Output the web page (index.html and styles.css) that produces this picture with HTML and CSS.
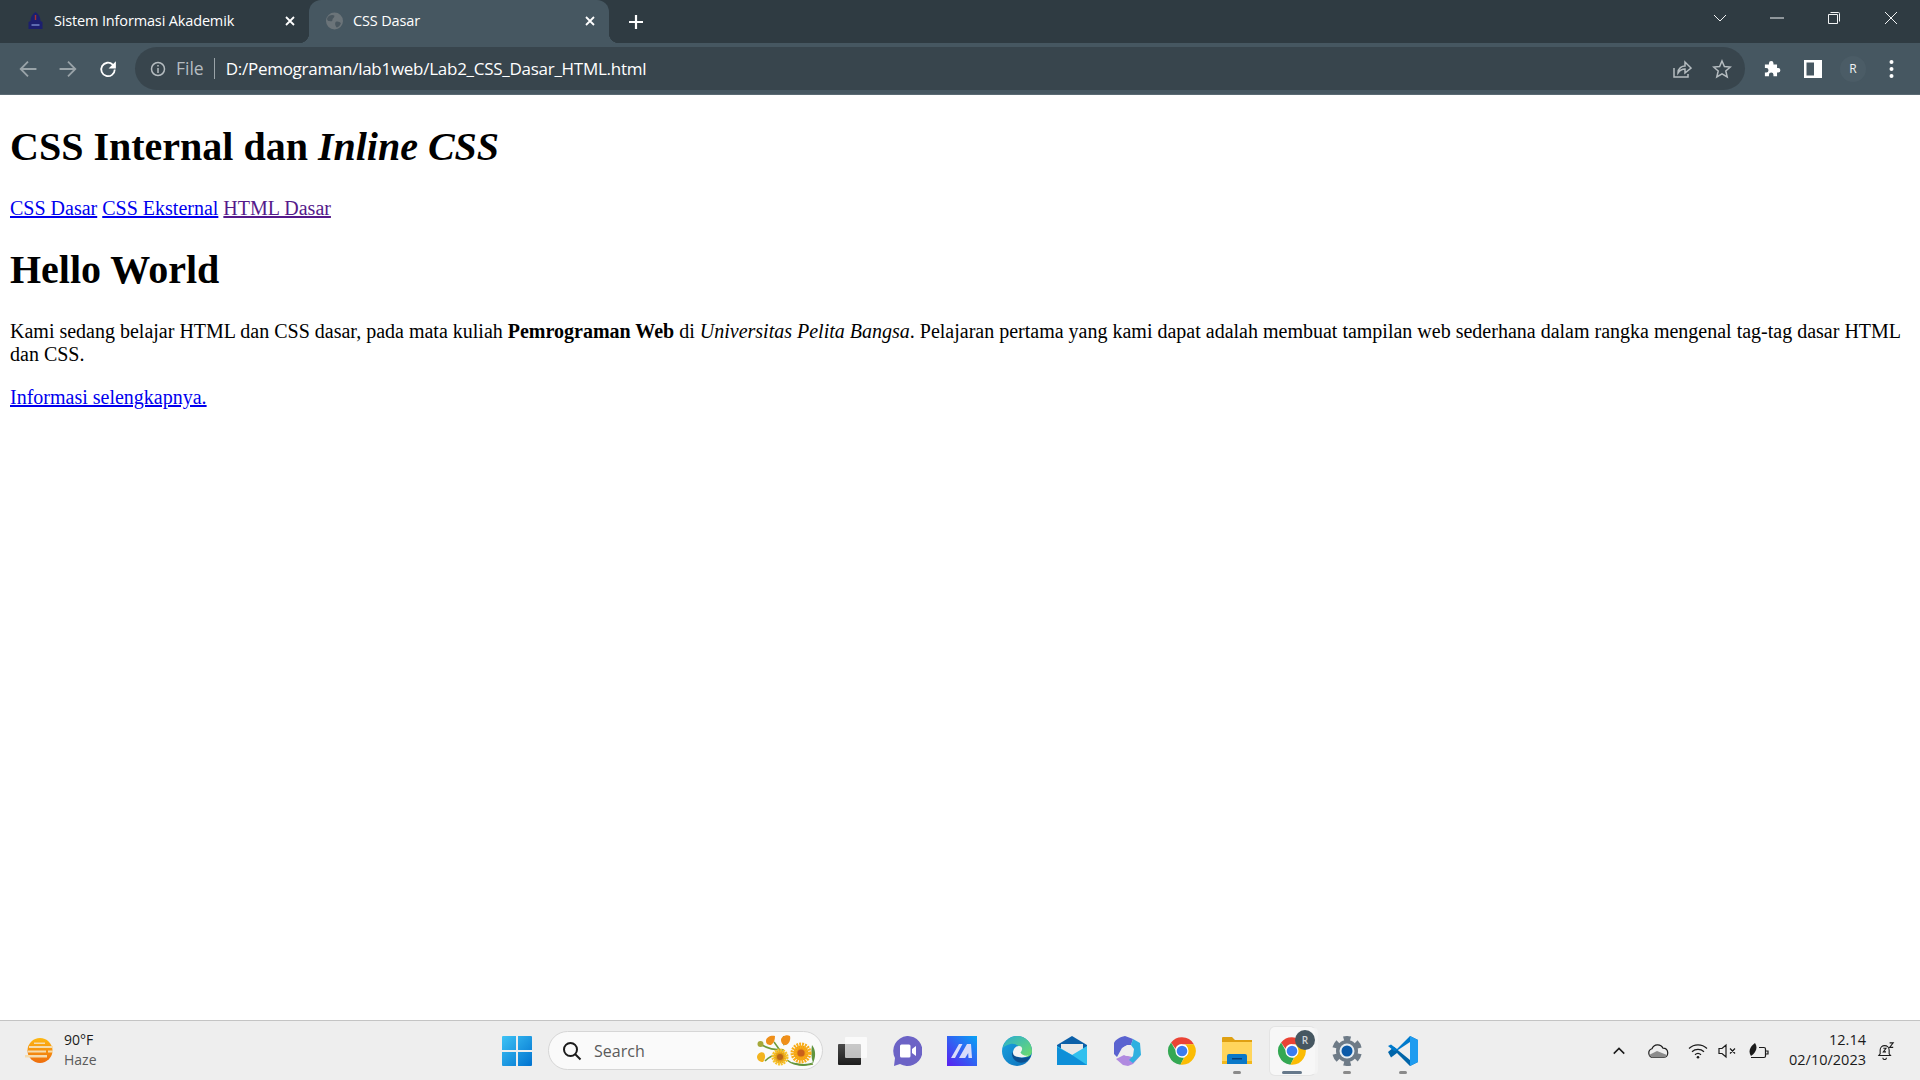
FILE: index.html
```html
<!DOCTYPE html>
<html lang="id">
<head>
  <meta charset="UTF-8" />
  <title>CSS Dasar</title>
  <link rel="stylesheet" href="styles.css">
</head>
<body>
  <svg class="defs" width="0" height="0">
    <symbol id="chrome" viewBox="0 0 48 48">
      <path fill="#ea4335" d="M24 2a22 22 0 0 1 19 11H24a11 11 0 0 0-10.400 7.400L6.500 10.300A22 22 0 0 1 24 2z"/>
      <path fill="#34a853" d="M6.500 10.300 15 25a11 11 0 0 0 12.400 9.500L21.500 45.900A22 22 0 0 1 6.500 10.300z"/>
      <path fill="#fbbc04" d="M43 13a22 22 0 0 1-21.500 32.900L30 30a11 11 0 0 0-1-17z"/>
      <circle cx="24" cy="24" r="10.500" fill="#fff"/>
      <circle cx="24" cy="24" r="8.500" fill="#3b7cf0"/>
    </symbol>
  </svg>

  <div class="window">
    <header class="tabstrip">
      <div class="tab">
        <svg class="favicon" viewBox="0 0 16 18">
          <path fill="#1c1f6e" d="M8 0c3 2 5 5 5 9l2 1v7H1v-7l2-1c0-4 2-7 5-9z"/>
          <path fill="#a8322d" d="M7.300 3h1.400v5H7.300z"/>
          <path fill="#5c6bb0" d="M4 12h8v2H4z"/>
        </svg>
        <span class="tab-title">Sistem Informasi Akademik</span>
        <svg class="tab-close" viewBox="0 0 10 10"><path d="M1 1l8 8M9 1l-8 8"/></svg>
      </div>
      <div class="tab tab-active">
        <svg class="favicon" viewBox="0 0 16 16">
          <circle cx="8" cy="8" r="8" fill="#6b7479"/>
          <path fill="#4a575f" d="M3 3c2-1 4-1 5 0 0 2-2 2-2 4s-2 1-3 1-2-1-2-2 1-2 2-3zM9 9c2-1 4 0 5 1-1 3-3 4-4 4-1-1-2-3-1-5z"/>
        </svg>
        <span class="tab-title">CSS Dasar</span>
        <svg class="tab-close" viewBox="0 0 10 10"><path d="M1 1l8 8M9 1l-8 8"/></svg>
      </div>
      <svg class="new-tab" viewBox="0 0 16 16"><path d="M8 1v14M1 8h14"/></svg>
      <div class="window-controls">
        <svg class="control" viewBox="0 0 14 14"><path d="M1 4l6 6 6-6"/></svg>
        <svg class="control" viewBox="0 0 14 14"><path d="M0 7h14"/></svg>
        <svg class="control" viewBox="0 0 14 14"><path d="M1.500 3.500h9v9h-9zM3.500 1.500h8a1 1 0 0 1 1 1v8"/></svg>
        <svg class="control" viewBox="0 0 14 14"><path d="M1 1l12 12M13 1L1 13"/></svg>
      </div>
    </header>

    <nav class="toolbar">
      <svg class="nav-icon nav-off" viewBox="0 0 16 16"><path d="M15.500 8H1.500M8 1.500L1.500 8 8 14.500"/></svg>
      <svg class="nav-icon nav-off" viewBox="0 0 16 16"><path d="M.5 8h14M8 1.500L14.500 8 8 14.500"/></svg>
      <svg class="nav-icon" viewBox="0 0 16 16"><path d="M14 8.500a6 6 0 1 1-1.800-4.400L14 6"/><path class="solid" d="M15 1v6.500H8.500z"/></svg>
      <div class="omnibox">
        <svg class="info" viewBox="0 0 16 16"><circle cx="8" cy="8" r="6.500"/><path d="M8 7v5M8 4v1.600"/></svg>
        <span class="scheme">File</span>
        <span class="url">D:/Pemograman/lab1web/Lab2_CSS_Dasar_HTML.html</span>
        <svg class="omni-icon share" viewBox="0 0 20 20"><path d="M2 9v9h14v-3M6 14c0-5 4-7 7-7V3l6 6-6 5v-4c-3 0-5 1-7 4z"/></svg>
        <svg class="omni-icon" viewBox="0 0 20 20"><path d="M10 2l2.400 5.500 6 .5-4.600 4 1.400 6L10 14.800 4.800 18l1.400-6-4.600-4 6-.5z"/></svg>
      </div>
      <svg class="tool-icon puzzle" viewBox="0 0 20 20"><path fill="#fff" d="M8 1a2.500 2.500 0 0 1 2.500 2.500V5h4v4h1.200a2.500 2.500 0 0 1 0 5h-1.200v4h-4v-1.500a2.500 2.500 0 0 0-5 0V18H1v-4h1.500a2.500 2.500 0 0 0 0-5H1V5h4.500V3.500A2.500 2.500 0 0 1 8 1z"/></svg>
      <svg class="tool-icon" viewBox="0 0 18 18"><path fill="#fff" fill-rule="evenodd" d="M0 0h18v18H0zM2.500 2.500v13H10v-13z"/></svg>
      <span class="avatar">R</span>
      <svg class="tool-icon menu" viewBox="0 0 4 18"><circle cx="2" cy="2" r="2" fill="#fff"/><circle cx="2" cy="9" r="2" fill="#fff"/><circle cx="2" cy="16" r="2" fill="#fff"/></svg>
    </nav>

    <main class="page">
      <h1>CSS Internal dan <i>Inline CSS</i></h1>
      <p>
        <a href="#a">CSS Dasar</a>
        <a href="#b">CSS Eksternal</a>
        <a class="visited" href="#c">HTML Dasar</a>
      </p>
      <h1 class="hello">Hello World</h1>
      <p>Kami sedang belajar HTML dan CSS dasar, pada mata kuliah <b>Pemrograman Web</b> di <i>Universitas Pelita Bangsa</i>. Pelajaran pertama yang kami dapat adalah membuat tampilan web sederhana dalam rangka mengenal tag-tag dasar HTML dan CSS.</p>
      <p><a href="#d">Informasi selengkapnya.</a></p>
    </main>

    <footer class="taskbar">
      <div class="weather">
        <svg class="weather-icon" viewBox="0 0 30 30">
          <defs>
            <linearGradient id="sun" x1="0" y1="0" x2="0" y2="1">
              <stop offset="0" stop-color="#fdb813"/>
              <stop offset="1" stop-color="#ee6c0c"/>
            </linearGradient>
          </defs>
          <circle cx="15" cy="14.500" r="12.500" fill="url(#sun)"/>
          <path fill="#f5dcae" d="M9 6.500h11v1.500H9zM4 10h24v2H4zM3 14.500h18v2H3zM23 14.500h5v2h-5zM0 19h22v2.500H0z"/>
        </svg>
        <div class="weather-text">
          <span>90°F</span>
          <span class="weather-sub">Haze</span>
        </div>
      </div>

      <div class="apps">
        <div class="app">
          <svg class="app-icon" viewBox="0 0 30 30">
            <defs>
              <linearGradient id="win" x1="0" y1="0" x2="1" y2="1">
                <stop offset="0" stop-color="#3ec3f5"/>
                <stop offset="1" stop-color="#0072cf"/>
              </linearGradient>
            </defs>
            <path fill="url(#win)" d="M0 1a1 1 0 0 1 1-1h13v14H0zM16 0h13a1 1 0 0 1 1 1v13H16zM0 16h14v14H1a1 1 0 0 1-1-1zM16 16h14v13a1 1 0 0 1-1 1H16z"/>
          </svg>
        </div>
        <div class="search">
          <svg class="search-icon" viewBox="0 0 20 20"><circle cx="8.500" cy="8.500" r="6.500"/><path d="M13 13l5.500 5.500"/></svg>
          <span class="search-text">Search</span>
          <svg class="flowers" viewBox="0 0 60 34">
            <path d="M5 11c6 4 14 5 22 5M17 8c3 4 5 7 7 10M8 27c4-4 8-6 12-6M30 26c6 5 16 6 26 4" stroke="#6f9a3a" stroke-width="1.600" fill="none"/>
            <path fill="#5f9440" d="M26 2l3 1-2 9-2-4zM34 28c8 2 16 3 23 0-6 5-16 5-23 0zM55 11c4 5 4 12 1 18-2-6-2-12-1-18z"/>
            <circle cx="3.500" cy="10" r="3" fill="#a5a83a"/>
            <path fill="#ef8f1a" d="M9 7c0-4 5-6 9-5 0 4-1 7-4 9-3 0-5-1-5-4zM24 6c0-3 5-6 9-4 1 4-1 8-4 9-3 0-5-2-5-5z"/>
            <path fill="#f3b41f" d="M0 23c0-3 4-6 7-4 2 3 1 6-1 9-3 0-6-2-6-5z"/>
            <circle cx="23" cy="23" r="6.500" fill="#e09a16" stroke="#f7c22c" stroke-width="4" stroke-dasharray="1.800 .7"/>
            <circle cx="23" cy="23" r="3" fill="#b8661c"/>
            <circle cx="44" cy="19" r="7.500" fill="#f09a12" stroke="#f8ad1a" stroke-width="6" stroke-dasharray="1.600 .8"/>
            <circle cx="44" cy="19" r="3.600" fill="#c9601c"/>
          </svg>
        </div>
        <div class="app">
          <svg class="app-icon" viewBox="0 0 30 30">
            <defs>
              <linearGradient id="tv" x1="0" y1="0" x2="0" y2="1">
                <stop offset="0" stop-color="#4a4a4a"/>
                <stop offset="1" stop-color="#1d1d1d"/>
              </linearGradient>
            </defs>
            <rect x="1" y="8" width="23" height="21" rx="1" fill="url(#tv)"/>
            <rect x="8" y="1" width="22" height="21" rx="1" fill="#fff" fill-opacity="0.7"/>
          </svg>
        </div>
        <div class="app">
          <svg class="app-icon" viewBox="0 0 30 30">
            <path fill="#6c63c6" d="M15 0a15 15 0 1 1-7 28l-6 2 1-8A15 15 0 0 1 15 0z"/>
            <path fill="#fff" d="M8 10a1.500 1.500 0 0 1 1.500-1.500H17a1.500 1.500 0 0 1 1.500 1.500v10a1.500 1.500 0 0 1-1.500 1.500H9.500A1.500 1.500 0 0 1 8 20zM20 13l4-3v10l-4-3z"/>
          </svg>
        </div>
        <div class="app">
          <svg class="app-icon" viewBox="0 0 30 30">
            <defs>
              <linearGradient id="mm" x1="0" y1="1" x2="1" y2="0">
                <stop offset="0" stop-color="#5a1ff0"/>
                <stop offset="1" stop-color="#08a4f5"/>
              </linearGradient>
            </defs>
            <path fill="url(#mm)" d="M0 0h30v30H0z"/>
            <path fill="#d9dcfa" d="M4 22L12 8h3.500L8 22zM12 22l8-14h4l1 14h-3.500l-.3-5-3 5z"/>
          </svg>
        </div>
        <div class="app">
          <svg class="app-icon" viewBox="0 0 30 30">
            <defs>
              <linearGradient id="edge" x1="0" y1="0" x2="1" y2="1">
                <stop offset="0" stop-color="#1ba6e2"/>
                <stop offset="1" stop-color="#0c6cb8"/>
              </linearGradient>
              <linearGradient id="edge2" x1="0" y1="0" x2="1" y2="1">
                <stop offset="0" stop-color="#2aaed0"/>
                <stop offset="1" stop-color="#6fdc6a"/>
              </linearGradient>
            </defs>
            <circle cx="15" cy="15" r="15" fill="url(#edge)"/>
            <path fill="#0b4f8f" d="M10 16c-1 7 6 13 13 10 3-1 5-4 6-7-2 2-5 3-8 3-5 0-9-2-11-6z"/>
            <path fill="url(#edge2)" d="M1 12C2 5 8 0 15 0c9 0 15 7 15 15 0 4-3 6-7 6-3 0-6-1-6.500-3 2-1 3-3 2-5-2-4-6-6-10-5C5 9 2 10 1 12z"/>
            <path fill="#f2f2f2" d="M11 17c0-4 3-7 6-7s4.500 3 1.500 6.500c1 2.500 4 3.500 8 3-3 2-7 2.500-10 1.500-3-.5-5.500-1.500-5.500-4z"/>
          </svg>
        </div>
        <div class="app">
          <svg class="app-icon" viewBox="0 0 30 30">
            <path fill="#0b5fa8" d="M0 9L15 0l15 9v4H0z"/>
            <path fill="#e8e8e8" d="M4 8h22v6l-11 6-11-6z"/>
            <path fill="#31c0ee" d="M0 10l15 9 15-9v19H0z"/>
            <path fill="#0e8fd8" d="M0 29V11l15 8 15 10z"/>
          </svg>
        </div>
        <div class="app">
          <svg class="app-icon" viewBox="0 0 30 30">
            <path fill="#b08ae0" d="M4 23l8-4 8 2 8-1-7 8-5 2-5-1z"/>
            <path fill="#5a63d0" d="M13 0l8 3-2 6-4 0-5 3-5 9-3-3V7c1-3 6-6 11-7z"/>
            <path fill="#2fb0e0" d="M21 3l7 4 1 12-8 8-4-3 4-4 1-7-3-4z"/>
            <circle cx="15" cy="15" r="5" fill="#eee"/>
          </svg>
        </div>
        <div class="app">
          <svg class="app-icon"><use href="#chrome"/></svg>
        </div>
        <div class="app app-open">
          <svg class="app-icon" viewBox="0 0 30 30">
            <path fill="#dfa012" d="M0 2a1 1 0 0 1 1-1h9l3 3h17v6H0z"/>
            <path fill="#ffd55c" d="M0 6h30v22H0z"/>
            <path fill="#f2b81c" d="M0 25h30v3H0z"/>
            <path fill="#0a78c8" d="M5 20a2 2 0 0 1 2-2h16a2 2 0 0 1 2 2v8H5z"/>
            <path fill="#063f78" d="M10 22h10v1.500H10z"/>
          </svg>
        </div>
        <div class="app app-active">
          <svg class="app-icon"><use href="#chrome"/></svg>
          <span class="profile-badge">R</span>
        </div>
        <div class="app app-open">
          <svg class="app-icon" viewBox="0 0 30 30">
            <circle cx="15" cy="15" r="11" fill="#6e7b87"/>
            <circle cx="15" cy="15" r="12.500" fill="none" stroke="#6e7b87" stroke-width="5" stroke-dasharray="6.800 6.290" transform="rotate(13 15 15)"/>
            <circle cx="15" cy="15" r="7.500" fill="#e6edf2"/>
            <circle cx="15" cy="15" r="5.500" fill="#0b5aa8"/>
          </svg>
        </div>
        <div class="app app-open">
          <svg class="app-icon" viewBox="0 0 30 30">
            <path fill="#0065a9" d="M22 0l8 4v22l-8 4-13-13-6 4.500L0 16l6-5 16 13z"/>
            <path fill="#007acc" d="M22 0L9 13 3 8.500 0 10l6 5 4-1 12-8z"/>
            <path fill="#1f9cf0" d="M22 0l8 4v22l-8 4z"/>
          </svg>
        </div>
      </div>

      <div class="tray">
        <svg class="tray-icon chevron" viewBox="0 0 16 16"><path d="M2 11l6-6 6 6"/></svg>
        <svg class="tray-icon cloud" viewBox="0 0 22 16"><path d="M6 14.500a4.500 4.500 0 0 1-1-8.800 6 6 0 0 1 11-.5 4.700 4.700 0 0 1 1 9.300z"/><path class="fill-grey" d="M2 12l8-4 10 4-2 2.500H5z"/></svg>
        <svg class="tray-icon wifi" viewBox="0 0 20 16"><path d="M1 5.500a13 13 0 0 1 18 0M4 8.700a9 9 0 0 1 12 0M7 11.700a4.500 4.500 0 0 1 6 0"/><circle class="solid-dark" cx="10" cy="14.300" r="1.300"/></svg>
        <svg class="tray-icon speaker" viewBox="0 0 20 16"><path d="M1 5.500h3L8 2v12l-4-3.500H1zM12 5.500l5 5M17 5.500l-5 5"/></svg>
        <svg class="tray-icon battery" viewBox="0 0 22 16"><path d="M4 14.500h13a1.500 1.500 0 0 0 1.500-1.500V6A1.500 1.500 0 0 0 17 4.500h-5M19 8h2v3h-2"/><path class="solid-dark" d="M8 0c2 3 2 6 0 9-1 2-3 3-4 4-2-3-2-6 0-9 1-2 3-3 4-4z"/></svg>
        <div class="clock">
          <span>12.14</span>
          <span>02/10/2023</span>
        </div>
        <svg class="tray-icon bell" viewBox="0 0 20 20"><path d="M2 15h13l-1.500-2V9a5 5 0 0 0-10 0v4zM6.500 17.500a2 2 0 0 0 4 0"/><path d="M7 7h3l-3 4h3M14 1h4l-4 5h4"/></svg>
      </div>
    </footer>
  </div>
</body>
</html>
```

FILE: styles.css
```css
body {
  margin: 0;
  background: #fff;
  font-family: 'Liberation Serif', serif;
  color: #000;
}
.defs {
  display: block;
  height: 0;
}
.window {
  display: flex;
  flex-direction: column;
  height: 100vh;
  overflow: hidden;
}

/* tabs */
.tabstrip {
  display: flex;
  align-items: stretch;
  height: 43px;
  background: #2f3b42;
  color: #fff;
  font-family: 'Open Sans', sans-serif;
  font-size: 14.500px;
}
.tab {
  display: flex;
  align-items: center;
  width: 309px;
  box-sizing: border-box;
  padding: 0 14px 2px 27px;
}
.tab-active {
  position: relative;
  width: 300px;
  padding: 0 14px 2px 17px;
  background: #465761;
  border-radius: 12px 12px 0 0;
}
.tab-active::before,
.tab-active::after {
  content: '';
  position: absolute;
  bottom: 0;
  width: 10px;
  height: 10px;
}
.tab-active::before {
  left: -10px;
  background: radial-gradient(circle at 0 0, #2f3b42 10px, #465761 10.500px);
}
.tab-active::after {
  right: -10px;
  background: radial-gradient(circle at 100% 0, #2f3b42 10px, #465761 10.500px);
}
.favicon {
  width: 17px;
  height: 18px;
  margin-right: 10px;
  flex: none;
}
.tab-title {
  flex: 1;
  letter-spacing: -0.15px;
}
.tab-close {
  width: 10px;
  height: 10px;
  flex: none;
  fill: none;
  stroke: #fff;
  stroke-width: 1.800;
}
.new-tab {
  align-self: center;
  width: 16px;
  height: 16px;
  margin-left: 19px;
  fill: none;
  stroke: #fff;
  stroke-width: 2.200;
}
.window-controls {
  display: flex;
  align-items: center;
  gap: 43px;
  margin-left: auto;
  padding: 0 22px 7px 0;
}
.control {
  width: 14px;
  height: 14px;
  fill: none;
  stroke: #f1f3f4;
  stroke-width: 1;
}

/* address bar */
.toolbar {
  display: flex;
  align-items: center;
  height: 52px;
  box-sizing: border-box;
  padding: 0 0 0 19px;
  background: #465761;
  border-bottom: 1px solid #5a6a73;
}
.nav-icon {
  width: 18px;
  height: 18px;
  margin-right: 22px;
  fill: none;
  stroke: #fff;
  stroke-width: 1.600;
}
.nav-off {
  opacity: 0.45;
}
.solid {
  fill: #fff;
  stroke: none;
}
.omnibox {
  display: flex;
  align-items: center;
  width: 1610px;
  height: 43px;
  box-sizing: border-box;
  margin-left: -4px;
  padding: 0 13px 0 15px;
  border-radius: 22px;
  background: #38454d;
  font-family: 'Open Sans', sans-serif;
}
.info {
  width: 16px;
  height: 16px;
  flex: none;
  fill: none;
  stroke: #b5bcc0;
  stroke-width: 1.500;
}
.scheme {
  margin-left: 10px;
  padding-right: 10px;
  border-right: 1px solid #9aa3a8;
  color: #b5bcc0;
  font-size: 17.500px;
  line-height: 21px;
}
.url {
  flex: 1;
  margin-left: 11px;
  color: #fff;
  font-size: 17px;
  letter-spacing: -0.27px;
}
.omni-icon {
  width: 20px;
  height: 20px;
  margin-left: 20px;
  flex: none;
  fill: none;
  stroke: #b5bcc0;
  stroke-width: 1.500;
}
.tool-icon {
  width: 18px;
  height: 18px;
  margin-left: 22px;
  flex: none;
}
.puzzle {
  margin-left: 19px;
}
.menu {
  width: 5px;
  margin-left: 23px;
}
.avatar {
  display: flex;
  align-items: center;
  justify-content: center;
  width: 26px;
  height: 26px;
  margin-left: 18px;
  border-radius: 50%;
  background: #4b5c66;
  color: #f1f3f4;
  font-family: 'Open Sans', sans-serif;
  font-size: 12px;
}

/* document */
.page {
  flex: 1;
  padding: 1px 10px 0;
  font-size: 20px;
  min-height: 0;
}
.page h1 {
  font-size: 40px;
  margin: 27px 0;
}
.page h1.hello {
  margin-top: 26px;
}
.page p {
  margin: 20px 0;
}
.page a {
  color: #0000ee;
}
.page a.visited {
  color: #551a8b;
}

/* windows taskbar */
.taskbar {
  display: grid;
  grid-template-columns: 489px auto 1fr;
  align-items: center;
  height: 60px;
  box-sizing: border-box;
  background: #eeeeee;
  border-top: 1px solid #c4c4c4;
  font-family: 'Open Sans', sans-serif;
  color: #1b1b1b;
}
.weather {
  display: flex;
  align-items: center;
  gap: 9px;
  padding-left: 25px;
}
.weather-icon {
  width: 30px;
  height: 30px;
}
.weather-text {
  display: flex;
  flex-direction: column;
  gap: 1px;
  padding-bottom: 2px;
  font-size: 14px;
  line-height: 19px;
}
.weather-sub {
  color: #5b5b5b;
}
.apps {
  display: flex;
  align-items: center;
}
.app {
  position: relative;
  display: flex;
  align-items: center;
  justify-content: center;
  width: 55.100px;
  height: 48px;
}
.app-icon {
  width: 30px;
  height: 30px;
}
.app-open::after,
.app-active::after {
  content: '';
  position: absolute;
  left: 50%;
  bottom: 1px;
  width: 8px;
  height: 3px;
  margin-left: -4px;
  border-radius: 2px;
  background: #8a8a8a;
}
.app-active {
  width: 45.100px;
  margin: 0 5px;
  border-radius: 5px;
  background: #f7f7f7;
  box-shadow: 4px 0 0 -1px #f3f3f3, 0 0 0 1px #e4e4e4;
}
.app-active::after {
  width: 20px;
  margin-left: -10px;
  background: #66788a;
}
.profile-badge {
  position: absolute;
  top: 3px;
  right: 0;
  width: 20px;
  height: 20px;
  border-radius: 50%;
  background: #465761;
  color: #d0d5d8;
  font-size: 10px;
  font-weight: 600;
  line-height: 20px;
  text-align: center;
}
.search {
  display: flex;
  align-items: center;
  width: 275px;
  height: 39px;
  box-sizing: border-box;
  margin: 0 1px 0 4px;
  padding: 0 5px 0 13px;
  border-radius: 20px;
  background: #fafafa;
  border: 1px solid #d6d6d6;
}
.search-icon {
  width: 20px;
  height: 20px;
  flex: none;
  fill: none;
  stroke: #1b1b1b;
  stroke-width: 2;
}
.search-text {
  flex: 1;
  margin-left: 12px;
  color: #5b5b5b;
  font-size: 16px;
}
.flowers {
  width: 60px;
  height: 34px;
  flex: none;
}
.tray {
  position: relative;
  display: flex;
  align-items: center;
  justify-content: flex-end;
  padding-right: 24px;
}
.tray-icon {
  width: 20px;
  height: 18px;
  flex: none;
  fill: none;
  stroke: #1b1b1b;
  stroke-width: 1.200;
}
.chevron {
  width: 14px;
  height: 14px;
  margin-right: 21px;
  stroke-width: 1.800;
}
.cloud {
  width: 22px;
  margin-right: 19px;
}
.fill-grey {
  fill: #8c8c8c;
  stroke: none;
}
.solid-dark {
  fill: #1b1b1b;
  stroke: none;
}
.wifi {
  margin-right: 10px;
}
.speaker {
  margin-right: 9px;
}
.battery {
  width: 22px;
}
.clock {
  display: flex;
  flex-direction: column;
  align-items: flex-end;
  margin: 0 10px 0 20px;
  padding-bottom: 2px;
  font-size: 14.500px;
  line-height: 20px;
}
```
